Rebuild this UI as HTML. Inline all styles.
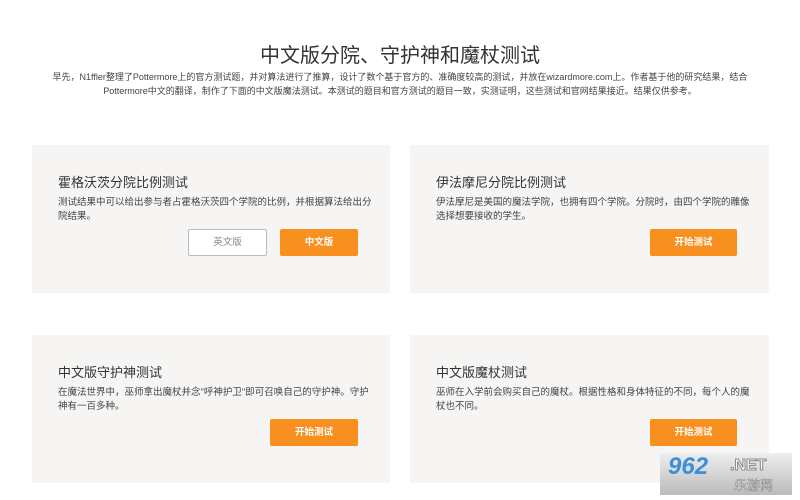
<!DOCTYPE html>
<html><head><meta charset="utf-8"><style>
*{margin:0;padding:0;box-sizing:border-box}
body{width:800px;height:500px;background:#fff;font-family:"Liberation Sans","Noto Sans CJK SC",sans-serif;position:relative;overflow:hidden;color:#333}
h1{position:absolute;top:39px;left:0;width:800px;text-align:center;font-size:20px;font-weight:normal;color:#333}
.intro{position:absolute;top:70px;left:40px;width:720px;text-align:center;font-size:9px;line-height:14px;color:#444}
.card{position:absolute;width:358px;height:148px;background:#f6f5f4;border-radius:2px}
.card h2{position:absolute;left:26px;top:27px;font-size:13px;font-weight:normal;color:#333}
.card p{position:absolute;left:26px;top:51px;width:318px;font-size:9.5px;line-height:14px;color:#444}
.btn{position:absolute;height:27px;border-radius:2px;background:#f7901e;color:#fff;font-size:9.5px;font-weight:bold;text-align:center;line-height:27px}
.btn.w{background:#fff;border:1px solid #bbb;color:#888;font-weight:normal;line-height:25px}
.wm{position:absolute;left:660px;top:453px;width:132px;height:42px;background:linear-gradient(#eee,#bbb);}
</style></head><body>
<h1>中文版分院、守护神和魔杖测试</h1>
<div class="intro">早先，N1ffler整理了Pottermore上的官方测试题，并对算法进行了推算，设计了数个基于官方的、准确度较高的测试，并放在wizardmore.com上。作者基于他的研究结果，结合Pottermore中文的翻译，制作了下面的中文版魔法测试。本测试的题目和官方测试的题目一致，实测证明，这些测试和官网结果接近。结果仅供参考。</div>
<div class="card" style="left:32px;top:145px"><h2>霍格沃茨分院比例测试</h2><p>测试结果中可以给出参与者占霍格沃茨四个学院的比例，并根据算法给出分院结果。</p>
<div class="btn w" style="left:156px;top:84px;width:79px">英文版</div><div class="btn" style="left:248px;top:84px;width:78px">中文版</div></div>
<div class="card" style="left:410px;top:145px;width:359px"><h2>伊法摩尼分院比例测试</h2><p>伊法摩尼是美国的魔法学院，也拥有四个学院。分院时，由四个学院的雕像选择想要接收的学生。</p>
<div class="btn" style="left:240px;top:84px;width:87px">开始测试</div></div>
<div class="card" style="left:32px;top:335px"><h2>中文版守护神测试</h2><p>在魔法世界中，巫师拿出魔杖并念"呼神护卫"即可召唤自己的守护神。守护神有一百多种。</p>
<div class="btn" style="left:238px;top:84px;width:88px">开始测试</div></div>
<div class="card" style="left:410px;top:335px;width:359px"><h2>中文版魔杖测试</h2><p>巫师在入学前会购买自己的魔杖。根据性格和身体特征的不同，每个人的魔杖也不同。</p>
<div class="btn" style="left:240px;top:84px;width:87px">开始测试</div></div>
<div class="wm"><span style="position:absolute;left:8px;top:0;font:italic bold 24px 'Liberation Sans';color:#3a8fd8">962</span><span style="position:absolute;left:70px;top:4px;font:bold 16px 'Liberation Sans';color:#fff;-webkit-text-stroke:1px #888">.NET</span><span style="position:absolute;left:74px;top:22px;font-size:13px;color:#fff;-webkit-text-stroke:.5px #777">乐游网</span></div>
</body></html>
